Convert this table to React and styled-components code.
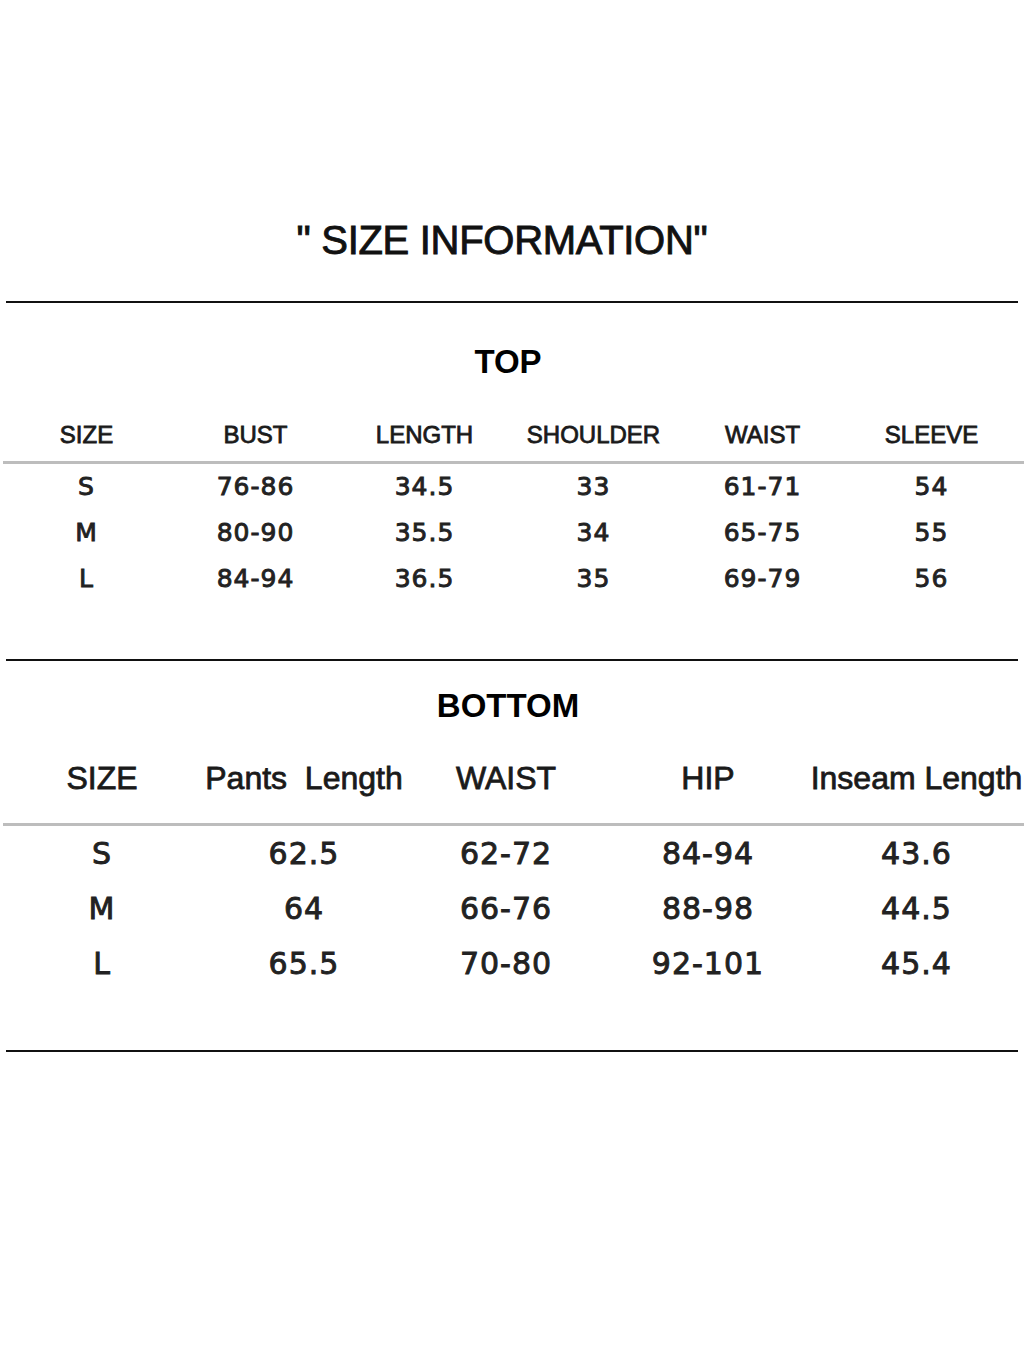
import styled, { createGlobalStyle } from 'styled-components';

const GlobalStyle = createGlobalStyle`
    html, body {
        margin: 0;
        padding: 0;
        background: #ffffff;
        overflow-x: hidden;
    }
`;

const topHeads = ['SIZE', 'BUST', 'LENGTH', 'SHOULDER', 'WAIST', 'SLEEVE'];
const topRows = [
    ['S', '76-86', '34.5', '33', '61-71', '54'],
    ['M', '80-90', '35.5', '34', '65-75', '55'],
    ['L', '84-94', '36.5', '35', '69-79', '56'],
];

const bottomHeads = ['SIZE', 'Pants\u00a0 Length', 'WAIST', 'HIP', 'Inseam Length'];
const bottomRows = [
    ['S', '62.5', '62-72', '84-94', '43.6'],
    ['M', '64', '66-76', '88-98', '44.5'],
    ['L', '65.5', '70-80', '92-101', '45.4'],
];

export default function App() {
    return (
        <>
            <GlobalStyle />
            <Page>
                <Title>" SIZE INFORMATION"</Title>
                <Divider $gap="37px" />

                <SectionTitle $gap="39px">TOP</SectionTitle>
                <Table $top="38px">
                    <HeadRow $cols="repeat(6, 169px)" $start="2px" $size="24px" $lh="30px">
                        {topHeads.map((h, i) => <span key={i}>{h}</span>)}
                    </HeadRow>
                    <Rule $gap="11px" />
                    {topRows.map((r, i) => (
                        <ValueRow key={i} $cols="repeat(6, 169px)" $start="2px" $size="25px" $lh="46px">
                            {r.map((v, j) => <span key={j}>{v}</span>)}
                        </ValueRow>
                    ))}
                </Table>
                <Divider $gap="57px" />

                <SectionTitle $gap="25px">BOTTOM</SectionTitle>
                <Table $top="32px">
                    <HeadRow $cols="repeat(4, 202px) 1fr" $start="1px" $size="32px" $lh="40px">
                        {bottomHeads.map((h, i) => <span key={i}>{h}</span>)}
                    </HeadRow>
                    <Rule $gap="25px" />
                    {bottomRows.map((r, i) => (
                        <ValueRow key={i} $cols="repeat(4, 202px) 1fr" $start="1px" $size="30px" $lh="55px">
                            {r.map((v, j) => <span key={j}>{v}</span>)}
                        </ValueRow>
                    ))}
                </Table>
                <Divider $gap="59px" />
            </Page>
        </>
    );
}

const Page = styled.div`
    width: 1024px;
    min-height: 1365px;
    padding-top: 216px;
    box-sizing: border-box;
    display: flex;
    flex-direction: column;
    color: #111111;
`;

const Title = styled.div`
    height: 48px;
    line-height: 48px;
    text-align: center;
    padding-right: 20px;
    font-family: "Liberation Sans", Arial, sans-serif;
    font-size: 40px;
    font-weight: 400;
    -webkit-text-stroke: 0.9px #111;
    color: #111111;
    letter-spacing: -0.3px;
`;

const Divider = styled.div`
    margin: ${p => p.$gap} 6px 0 6px;
    height: 2px;
    background: #111111;
`;

const SectionTitle = styled.div`
    margin-top: ${p => p.$gap};
    height: 40px;
    line-height: 40px;
    text-align: center;
    padding-right: 8px;
    font-family: "Liberation Sans", Arial, sans-serif;
    font-size: 33px;
    font-weight: 700;
    color: #000000;
`;

const Table = styled.div`
    margin-top: ${p => p.$top};
    display: flex;
    flex-direction: column;
`;

const Row = styled.div`
    display: grid;
    grid-template-columns: ${p => p.$cols};
    padding-left: ${p => p.$start};
    height: ${p => p.$lh};
    line-height: ${p => p.$lh};
    font-size: ${p => p.$size};

    span {
        text-align: center;
        white-space: nowrap;
    }
`;

const HeadRow = styled(Row)`
    font-family: "Liberation Sans", Arial, sans-serif;
    font-weight: 400;
    -webkit-text-stroke: 0.8px #1a1a1a;
    color: #1a1a1a;
`;

const ValueRow = styled(Row)`
    font-family: "DejaVu Sans", Verdana, sans-serif;
    font-weight: 400;
    letter-spacing: 1px;
    -webkit-text-stroke: 0.9px #222;
    color: #222222;
`;

const Rule = styled.div`
    margin-top: ${p => p.$gap};
    margin-left: 3px;
    height: 3px;
    background: #bdbdbd;
`;
